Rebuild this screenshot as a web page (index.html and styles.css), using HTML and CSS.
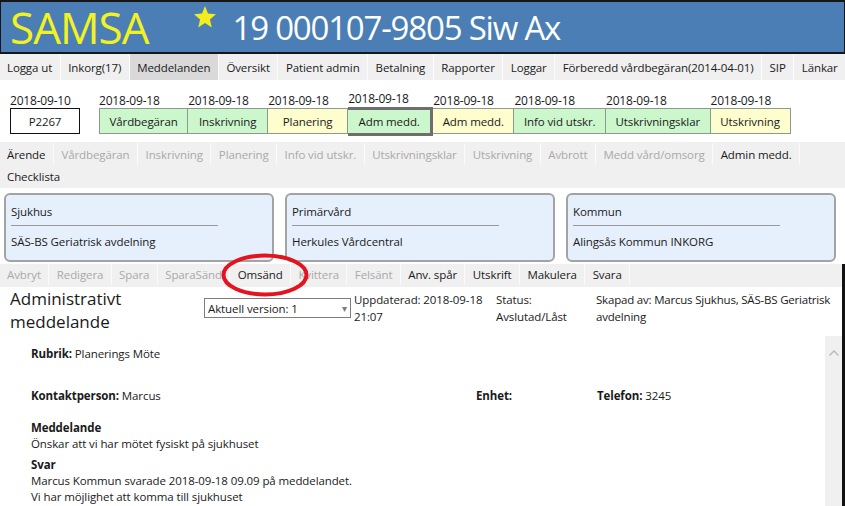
FILE: index.html
```html
<!DOCTYPE html>
<html lang="sv">
<head>
<meta charset="utf-8">
<title>SAMSA</title>
<link rel="stylesheet" href="styles.css">
</head>
<body>
<div class="app">
  <header class="topbar">
    <span class="brand">SAMSA</span>
    <svg class="star" viewBox="0 0 24 24" width="24" height="24" aria-hidden="true"><polygon points="12,1 15,8.6 23,9.2 16.9,14.4 18.8,22.4 12,18.1 5.2,22.4 7.1,14.4 1,9.2 9,8.6" fill="#f4ec1c"/></svg>
    <span class="patient">19 000107-9805 Siw Ax</span>
  </header>

  <nav class="menu">
    <span class="menu-item">Logga ut</span>
    <span class="menu-item">Inkorg(17)</span>
    <span class="menu-item is-active">Meddelanden</span>
    <span class="menu-item">Översikt</span>
    <span class="menu-item">Patient admin</span>
    <span class="menu-item">Betalning</span>
    <span class="menu-item">Rapporter</span>
    <span class="menu-item">Loggar</span>
    <span class="menu-item">Förberedd vårdbegäran(2014-04-01)</span>
    <span class="menu-item">SIP</span>
    <span class="menu-item">Länkar</span>
  </nav>

  <section class="timeline">
    <div class="step step-id">
      <span class="date">2018-09-10</span>
      <span class="box box-id">P2267</span>
    </div>
    <div class="steps">
      <div class="step"><span class="date">2018-09-18</span><span class="box green">Vårdbegäran</span></div>
      <div class="step"><span class="date">2018-09-18</span><span class="box green">Inskrivning</span></div>
      <div class="step"><span class="date">2018-09-18</span><span class="box yellow">Planering</span></div>
      <div class="step is-selected"><span class="date">2018-09-18</span><span class="box green">Adm medd.</span></div>
      <div class="step"><span class="date">2018-09-18</span><span class="box yellow">Adm medd.</span></div>
      <div class="step"><span class="date">2018-09-18</span><span class="box green">Info vid utskr.</span></div>
      <div class="step"><span class="date">2018-09-18</span><span class="box green">Utskrivningsklar</span></div>
      <div class="step"><span class="date">2018-09-18</span><span class="box yellow">Utskrivning</span></div>
    </div>
  </section>

  <nav class="tabs">
    <div class="tab-row">
      <span class="tab on">Ärende</span>
      <span class="tab">Vårdbegäran</span>
      <span class="tab">Inskrivning</span>
      <span class="tab">Planering</span>
      <span class="tab">Info vid utskr.</span>
      <span class="tab">Utskrivningsklar</span>
      <span class="tab">Utskrivning</span>
      <span class="tab">Avbrott</span>
      <span class="tab">Medd vård/omsorg</span>
      <span class="tab on">Admin medd.</span>
    </div>
    <div class="tab-row">
      <span class="tab on plain">Checklista</span>
    </div>
  </nav>

  <section class="cards">
    <div class="card">
      <div class="card-title">Sjukhus</div>
      <div class="card-value">SÄS-BS Geriatrisk avdelning</div>
    </div>
    <div class="card">
      <div class="card-title">Primärvård</div>
      <div class="card-value">Herkules Vårdcentral</div>
    </div>
    <div class="card">
      <div class="card-title">Kommun</div>
      <div class="card-value">Alingsås Kommun INKORG</div>
    </div>
  </section>

  <div class="detail">
    <nav class="toolbar">
      <span class="tab">Avbryt</span>
      <span class="tab">Redigera</span>
      <span class="tab">Spara</span>
      <span class="tab">SparaSänd</span>
      <span class="tab on">Omsänd</span>
      <span class="tab">Kvittera</span>
      <span class="tab">Felsänt</span>
      <span class="tab on">Anv. spår</span>
      <span class="tab on">Utskrift</span>
      <span class="tab on">Makulera</span>
      <span class="tab on">Svara</span>
      <svg class="annot" viewBox="0 0 88 44" width="88" height="44" aria-hidden="true"><ellipse cx="44" cy="22" rx="41.5" ry="19.5" fill="none" stroke="#e3141f" stroke-width="4"/></svg>
    </nav>

    <section class="msg-head">
      <h1 class="msg-title">Administrativt meddelande</h1>
      <div class="select"><span>Aktuell version: 1</span><span class="caret">▾</span></div>
      <div class="meta meta-date">Uppdaterad: 2018-09-18 21:07</div>
      <div class="meta meta-status">Status: Avslutad/Låst</div>
      <div class="meta meta-by">Skapad av: Marcus Sjukhus, SÄS-BS Geriatrisk avdelning</div>
    </section>

    <section class="msg-body">
      <div class="msg-content">
        <p class="row"><b>Rubrik:</b> Planerings Möte</p>
        <div class="row grid3">
          <p><b>Kontaktperson:</b> Marcus</p>
          <p><b>Enhet:</b></p>
          <p><b>Telefon:</b> 3245</p>
        </div>
        <div class="block">
          <b>Meddelande</b>
          <p>Önskar att vi har mötet fysiskt på sjukhuset</p>
        </div>
        <div class="block">
          <b>Svar</b>
          <p>Marcus Kommun svarade 2018-09-18 09.09 på meddelandet.</p>
          <p>Vi har möjlighet att komma till sjukhuset</p>
        </div>
      </div>
      <div class="scrollbar">
        <svg class="chev" viewBox="0 0 10 6" width="10" height="6" aria-hidden="true"><polyline points="0.5,5.5 5,1 9.5,5.5" fill="none" stroke="#b8b8b8" stroke-width="1.3"/></svg>
      </div>
    </section>
  </div>
</div>
</body>
</html>
```

FILE: styles.css
```css
* { box-sizing: border-box; }
html, body { margin: 0; padding: 0; background: #fff; }
body {
  font-family: "Open Sans", "Noto Sans", "Liberation Sans", sans-serif;
  font-size: 11.5px;
  letter-spacing: -0.1px;
  color: #1a1a1a;
  width: 845px;
  height: 506px;
  overflow: hidden;
}
p, h1 { margin: 0; }

.app { display: flex; flex-direction: column; height: 506px; }
.app > * { flex-shrink: 0; }

/* top bar */
.topbar {
  height: 54px;
  background: #4a7eb5;
  border: 2px solid #161616;
  border-width: 2px 1px 2px 1px;
  display: flex;
  align-items: flex-start;
  padding-left: 9px;
}
.brand {
  color: #f2f221;
  font-size: 44px;
  line-height: 50px;
  letter-spacing: -1px;
}
.star { margin: 3px 0 0 45px; }
.patient {
  color: #fff;
  font-size: 33px;
  line-height: 50px;
  letter-spacing: -1.2px;
  margin-left: 15px;
  margin-top: 1px;
}

/* main menu */
.menu {
  height: 26px;
  background: #f0f0f0;
  display: flex;
  align-items: stretch;
}
.menu-item {
  display: flex;
  align-items: center;
  padding: 0 7.5px;
  border-right: 1px solid #fbfbfb;
  white-space: nowrap;
}
.menu-item:first-child { padding-left: 7px; }
.menu-item.is-active { background: #d9d9d9; }

/* timeline */
.timeline {
  height: 62px;
  display: flex;
  align-items: flex-start;
  padding: 13px 0 0 10px;
}
.steps { display: flex; margin-left: 19px; }
.step { display: flex; flex-direction: column; align-items: flex-start; }
.date { font-size: 12px; letter-spacing: -0.2px; line-height: 15px; height: 15px; }
.box {
  height: 26px;
  min-width: 80px;
  display: flex;
  align-items: center;
  justify-content: center;
  padding: 0 9.5px;
  border: 1px solid #8c9a8c;
  white-space: nowrap;
}
.box-id { width: 70px; min-width: 0; border-color: #111; background: #fff; }
.green { background: #ccf6cc; }
.yellow { background: #fdfdcd; }
.steps .step + .step .box { border-left: 0; }
.step.is-selected .date { margin-top: -2px; }
.step.is-selected .box {
  height: 29px;
  min-width: 85px;
  border: 3px solid #6e6e6e;
  margin-top: 1px;
}

/* sub tabs */
.tabs {
  background: #f0f0f0;
  height: 46px;
  padding-top: 1px;
}
.tab-row { display: flex; height: 22px; }
.tab {
  display: flex;
  align-items: center;
  padding: 0 7.5px;
  border-right: 1px solid #fbfbfb;
  color: #a9a9a9;
  white-space: nowrap;
}
.tab:first-child { padding-left: 7px; }
.tab.on { color: #1a1a1a; }
.tab.plain { border-right: 0; }

/* cards */
.cards {
  display: flex;
  gap: 11px;
  padding: 5px 9px 0 4px;
  height: 76px;
}
.card {
  flex: 1;
  height: 69px;
  background: #e6f0fc;
  border: 2px solid #a3a3a3;
  border-radius: 6px;
  padding: 8px 5px 0 5px;
}
.card-title {
  width: 81%;
  line-height: 17px;
  padding-bottom: 5px;
  border-bottom: 1px solid #9a9a9a;
}
.card-value { line-height: 17px; margin-top: 7px; }

/* detail area (toolbar + message) */
.detail {
  flex: 1 1 0;
  min-height: 0;
  display: flex;
  flex-direction: column;
  border-right: 3px solid #111;
}
.detail > * { flex-shrink: 0; }

.toolbar {
  position: relative;
  background: #f0f0f0;
  height: 23px;
  padding-bottom: 2px;
  display: flex;
}
.toolbar .tab { padding: 0 7.4px; }
.toolbar .tab:first-child { padding-left: 7px; }
.annot {
  position: absolute;
  left: 221px;
  top: -11px;
}

/* message header */
.msg-head {
  display: flex;
  align-items: flex-start;
  height: 49px;
  padding-left: 10px;
}
.msg-title {
  width: 194px;
  font-size: 17px;
  font-weight: normal;
  letter-spacing: 0;
  line-height: 23px;
}
.select {
  width: 147px;
  height: 20px;
  margin-top: 11px;
  border: 1px solid #7d7d7d;
  display: flex;
  align-items: center;
  justify-content: space-between;
  padding: 0 3px 0 3px;
  white-space: nowrap;
}
.caret { color: #7a7a7a; font-size: 10px; }
.meta { line-height: 17px; margin-top: 4px; padding-left: 3px; }
.meta-date { width: 142px; }
.meta-status { width: 100px; }
.meta-by { flex: 1; letter-spacing: -0.2px; }

/* message body */
.msg-body {
  flex: 1 1 0;
  min-height: 0;
  overflow: hidden;
  display: flex;
}
.msg-content { flex: 1; padding: 10px 0 0 31px; line-height: 16px; }
.row { margin-bottom: 26px; }
.grid3 { display: grid; grid-template-columns: 445px 121px 1fr; margin-bottom: 16px; }
.block { margin-bottom: 5px; }
.block b { display: block; }
.scrollbar {
  width: 17px;
  background: #f0f0f0;
  display: flex;
  justify-content: center;
  padding-top: 14px;
}
.chev { display: block; }
```
